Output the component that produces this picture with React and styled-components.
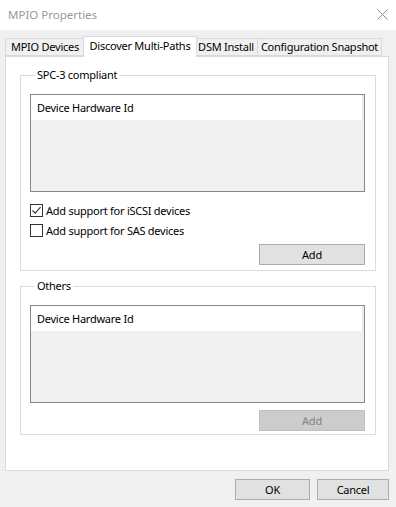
import React from "react";
import styled, { createGlobalStyle } from "styled-components";

const GlobalStyle = createGlobalStyle`
  html, body {
    margin: 0;
    padding: 0;
    background: #f0f0f0;
  }
  body {
    font-family: "Noto Sans", "Open Sans", sans-serif;
    font-size: 11px;
    letter-spacing: -0.25px;
    color: #000;
  }
`;

const Window = styled.div`
  width: 396px;
  height: 507px;
  display: flex;
  flex-direction: column;
  background: #f0f0f0;
  overflow: hidden;
`;

const TitleBar = styled.div`
  height: 30px;
  background: #fff;
  display: flex;
  align-items: center;
  justify-content: space-between;
  padding: 0 8px 2px 8px;
  box-sizing: border-box;
`;

const Title = styled.span`
  color: #999;
  font-size: 11.5px;
  letter-spacing: 0;
`;

const Close = styled.span`
  display: flex;
`;

const Body = styled.div`
  padding: 6px 7px 0 5px;
  display: flex;
  flex-direction: column;
`;

const TabList = styled.div`
  display: flex;
  align-items: flex-end;
  height: 20px;
  position: relative;
  z-index: 1;
`;

const Tab = styled.div`
  box-sizing: border-box;
  width: ${(p) => p.$w}px;
  height: ${(p) => (p.$active ? 21 : 18)}px;
  margin-left: ${(p) => (p.$active ? -2 : -1)}px;
  margin-right: ${(p) => (p.$active ? -2 : 0)}px;
  margin-bottom: ${(p) => (p.$active ? -1 : 0)}px;
  border: 1px solid #d9d9d9;
  border-bottom: ${(p) => (p.$active ? "none" : "1px solid #d9d9d9")};
  background: ${(p) => (p.$active ? "#fff" : "#f0f0f0")};
  display: flex;
  justify-content: center;
  align-items: ${(p) => (p.$active ? "flex-start" : "center")};
  padding-top: ${(p) => (p.$active ? 1 : 0)}px;
  line-height: 16px;
  white-space: nowrap;
  position: relative;
  z-index: ${(p) => (p.$active ? 2 : 1)};
  &:first-child {
    margin-left: 0;
  }
`;

const Panel = styled.div`
  box-sizing: border-box;
  height: 415px;
  border: 1px solid #d9d9d9;
  background: #fff;
  padding: 10px 12px 0 14px;
  display: flex;
  flex-direction: column;
`;

const Group = styled.fieldset`
  margin: 0 0 ${(p) => p.$gap || 0}px 0;
  border: 1px solid #dcdcdc;
  padding: 0 10px ${(p) => p.$pb}px 9px;
  display: flex;
  flex-direction: column;
  min-width: 0;
`;

const Legend = styled.legend`
  padding: 0 2px;
  margin-left: 5px;
  line-height: 16px;
`;

const ListView = styled.div`
  box-sizing: border-box;
  margin-top: 11px;
  height: 98px;
  border: 1px solid #828790;
  background: #f0f0f0;
  display: flex;
  flex-direction: column;
`;

const ListHeader = styled.div`
  height: 25px;
  background: #fff;
  margin-right: 1px;
  border-right: 1px solid #e5e5e5;
  display: flex;
  align-items: center;
  padding-left: 6px;
  padding-bottom: 1px;
  box-sizing: border-box;
`;

const CheckList = styled.div`
  margin-top: 8px;
  display: flex;
  flex-direction: column;
`;

const CheckRow = styled.label`
  height: 20px;
  display: flex;
  align-items: center;
  gap: 3px;
`;

const Box = styled.span`
  box-sizing: border-box;
  width: 13px;
  height: 13px;
  border: 1px solid #333;
  background: #fff;
  display: flex;
  align-items: center;
  justify-content: center;
`;

const ButtonRow = styled.div`
  display: flex;
  justify-content: flex-end;
  margin-top: ${(p) => p.$mt}px;
`;

const Button = styled.div`
  box-sizing: border-box;
  width: ${(p) => p.$w}px;
  height: 21px;
  border: 1px solid ${(p) => (p.$disabled ? "#bfbfbf" : "#adadad")};
  background: ${(p) => (p.$disabled ? "#cccccc" : "#e1e1e1")};
  color: ${(p) => (p.$disabled ? "#838383" : "#000")};
  display: flex;
  align-items: center;
  justify-content: center;
  padding-bottom: 1px;
`;

const Footer = styled.div`
  display: flex;
  justify-content: flex-end;
  gap: 7px;
  margin-top: 8px;
`;

const Check = ({ checked, children }) => (
  <CheckRow>
    <Box>
      {checked && (
        <svg width="11" height="11" viewBox="0 0 11 11">
          <path d="M1.5 5.5 L4.2 8.2 L9.5 2.2" fill="none" stroke="#333" strokeWidth="1.1" />
        </svg>
      )}
    </Box>
    <span>{children}</span>
  </CheckRow>
);

export default function App() {
  return (
    <>
      <GlobalStyle />
      <Window>
        <TitleBar>
          <Title>MPIO Properties</Title>
          <Close>
            <svg width="11" height="11" viewBox="0 0 11 11">
              <path d="M0.5 0.5 L10.5 10.5 M10.5 0.5 L0.5 10.5" stroke="#8c8c8c" strokeWidth="1" />
            </svg>
          </Close>
        </TitleBar>
        <Body>
          <TabList>
            <Tab $w={80}>MPIO Devices</Tab>
            <Tab $w={114} $active>Discover Multi-Paths</Tab>
            <Tab $w={64}>DSM Install</Tab>
            <Tab $w={125}>Configuration Snapshot</Tab>
          </TabList>
          <Panel>
            <Group $pb={5} $gap={7}>
              <Legend>SPC-3 compliant</Legend>
              <ListView>
                <ListHeader>Device Hardware Id</ListHeader>
              </ListView>
              <CheckList>
                <Check checked>Add support for iSCSI devices</Check>
                <Check>Add support for SAS devices</Check>
              </CheckList>
              <ButtonRow $mt={4}>
                <Button $w={106}>Add</Button>
              </ButtonRow>
            </Group>
            <Group $pb={3}>
              <Legend>Others</Legend>
              <ListView>
                <ListHeader>Device Hardware Id</ListHeader>
              </ListView>
              <ButtonRow $mt={7}>
                <Button $w={106} $disabled>Add</Button>
              </ButtonRow>
            </Group>
          </Panel>
          <Footer>
            <Button $w={75}>OK</Button>
            <Button $w={72}>Cancel</Button>
          </Footer>
        </Body>
      </Window>
    </>
  );
}
